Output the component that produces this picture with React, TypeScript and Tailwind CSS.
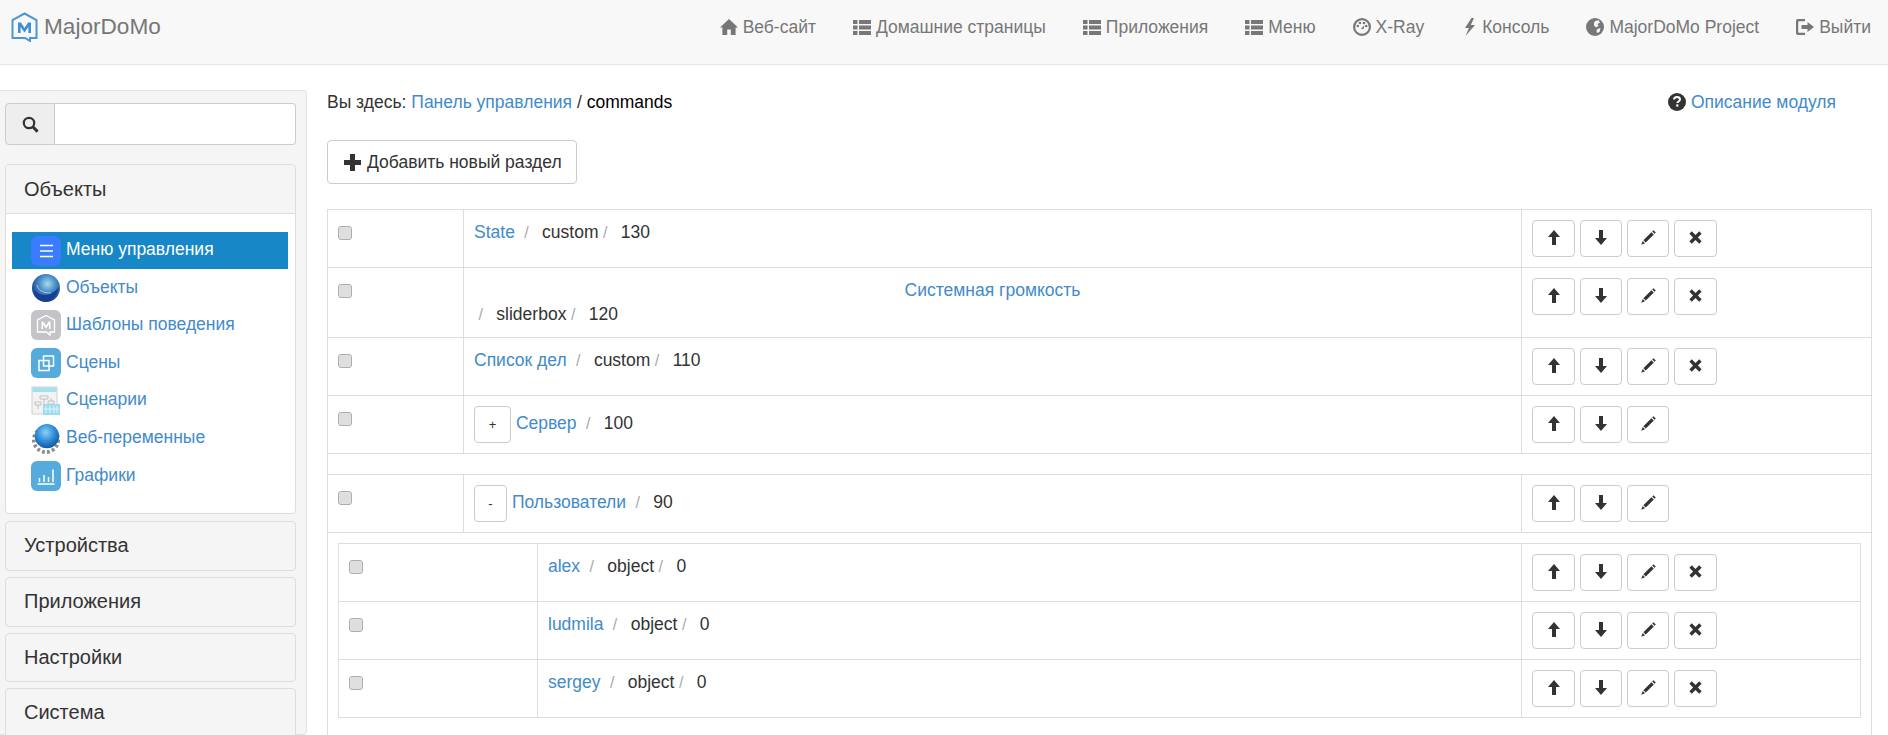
import type { ReactNode } from "react";

const navIconClass = "shrink-0 fill-current";

function IconHome() {
  return (
    <svg width="18" height="16" viewBox="0 0 18 16" className={navIconClass}>
      <path d="M9 0 L18 8.4 L15.6 8.4 L15.6 16 L10.8 16 L10.8 10.6 L7.2 10.6 L7.2 16 L2.4 16 L2.4 8.4 L0 8.4 Z" />
    </svg>
  );
}

function IconList() {
  return (
    <svg width="18" height="15" viewBox="0 0 18 15" className={navIconClass}>
      <path d="M0 0h4.5v4H0zM6 0h12v4H6zM0 5.5h4.5v4H0zM6 5.5h12v4H6zM0 11h4.5v4H0zM6 11h12v4H6z" />
    </svg>
  );
}

function IconDashboard() {
  return (
    <svg width="18" height="18" viewBox="0 0 18 18" className={navIconClass}>
      <path
        fillRule="evenodd"
        d="M9 0a9 9 0 1 1 0 18A9 9 0 0 1 9 0zm0 2.2a6.8 6.8 0 1 0 0 13.6A6.8 6.8 0 0 0 9 2.2z"
      />
      <circle cx="4.8" cy="8" r="1.3" />
      <circle cx="7" cy="5" r="1.3" />
      <circle cx="11" cy="5" r="1.3" />
      <circle cx="13.2" cy="8" r="1.3" />
      <path d="M8 10.6 L11.4 7.2 L10.4 11.6 Z" />
    </svg>
  );
}

function IconFlash() {
  return (
    <svg width="16" height="18" viewBox="0 0 16 18" className={navIconClass}>
      <path d="M10.5 0 L4 10 L8 10 L4.5 18 L14 7 L9.8 7 L13 0 Z" />
    </svg>
  );
}

function IconGlobe() {
  return (
    <svg width="18" height="18" viewBox="0 0 18 18" className={navIconClass}>
      <circle cx="9" cy="9" r="9" />
      <path
        fill="#f8f8f8"
        d="M9 3 L12.5 2.2 L14 4.5 L11.5 6 L12.5 8 L10 9.5 L8 7.5 L8 5 Z M11.5 11 L14.5 10 L13.5 14 L11 15 L10.5 12.5 Z"
      />
    </svg>
  );
}

function IconLogout() {
  return (
    <svg width="18" height="16" viewBox="0 0 18 16" className={navIconClass}>
      <path d="M2 0h7v2.2H3a.8.8 0 0 0-.8.8v10c0 .4.4.8.8.8h6V16H2a2 2 0 0 1-2-2V2a2 2 0 0 1 2-2z" />
      <path d="M11.5 3 L18 8 L11.5 13 L11.5 10 L5.5 10 L5.5 6 L11.5 6 Z" />
    </svg>
  );
}

function IconSearch() {
  return (
    <svg width="17" height="17" viewBox="0 0 17 17" fill="none" stroke="#333" className="shrink-0">
      <circle cx="7" cy="7" r="5.2" strokeWidth="2.2" />
      <path d="M10.8 10.8 L15.6 15.6" strokeWidth="3" />
    </svg>
  );
}

function IconPlus() {
  return (
    <svg width="17" height="17" viewBox="0 0 17 17" fill="#333" className="shrink-0">
      <path d="M6 0h5v6h6v5h-6v6H6v-6H0V6h6z" />
    </svg>
  );
}

function IconHelp() {
  return (
    <svg width="18" height="18" viewBox="0 0 18 18" className="shrink-0">
      <circle cx="9" cy="9" r="9" fill="#333" />
      <path
        d="M6 6.6C6 4.9 7.3 4 9 4s3 .9 3 2.5c0 1.9-2.6 2-2.6 3.4"
        fill="none"
        stroke="#fff"
        strokeWidth="1.9"
      />
      <rect x="8.2" y="11.4" width="2.2" height="2.2" fill="#fff" />
    </svg>
  );
}

function IconUp() {
  return (
    <svg width="12" height="15" viewBox="0 0 12 15" fill="#333" className="-translate-y-[1px]">
      <path d="M6 0 L12 7 L8 7 L8 15 L4 15 L4 7 L0 7 Z" />
    </svg>
  );
}

function IconDown() {
  return (
    <svg width="12" height="15" viewBox="0 0 12 15" fill="#333" className="-translate-y-[1px]">
      <path d="M6 15 L0 8 L4 8 L4 0 L8 0 L8 8 L12 8 Z" />
    </svg>
  );
}

function IconPencil() {
  return (
    <svg width="15" height="15" viewBox="0 0 15 15" fill="#333" className="-translate-y-[1px]">
      <path d="M12.4 0.2 L14.8 2.6 L13.6 3.8 L11.2 1.4 Z M10.4 2.2 L12.8 4.6 L4.8 12.6 L2.4 10.2 Z M1.8 11 L4 13.2 L0.2 14.8 Z" />
    </svg>
  );
}

function IconRemove() {
  return (
    <svg width="13" height="13" viewBox="0 0 14 14" fill="#333" className="-translate-y-[1px]">
      <path d="M3 0.4 L7 4.4 L11 0.4 L13.6 3 L9.6 7 L13.6 11 L11 13.6 L7 9.6 L3 13.6 L0.4 11 L4.4 7 L0.4 3 Z" />
    </svg>
  );
}

function Logo() {
  return (
    <svg width="27" height="30" viewBox="0 0 27 30" fill="none" className="shrink-0">
      <path
        d="M13.5 1.5 L25.5 8 L25.5 26 L19 26 L19 29 L14 26 L1.5 26 L1.5 8 Z"
        stroke="#4a97d6"
        strokeWidth="2"
      />
      <path d="M7 21 L7 10.5 L10 10.5 L13.5 16 L17 10.5 L20 10.5 L20 21 L17.4 21 L17.4 15 L13.5 20.6 L9.6 15 L9.6 21 Z" fill="#3f8fd2" />
    </svg>
  );
}

function SideIconMenu() {
  return (
    <svg width="30" height="30" viewBox="0 0 30 30">
      <rect width="30" height="30" rx="7" fill="#3a7bff" />
      <path d="M9 9.5h13M9 15h13M9 20.5h13" stroke="#fff" strokeWidth="1.6" />
    </svg>
  );
}

function SideIconSphere() {
  return (
    <svg width="30" height="30" viewBox="0 0 30 30">
      <defs>
        <radialGradient id="sphere1" cx="55%" cy="35%" r="65%">
          <stop offset="0%" stopColor="#a6dcef" />
          <stop offset="45%" stopColor="#4a8fc8" />
          <stop offset="100%" stopColor="#123a86" />
        </radialGradient>
      </defs>
      <circle cx="15" cy="15" r="14" fill="url(#sphere1)" />
      <path d="M3 17 C9 24 20 24 28 14 C26 25 18 29 13 28.5 C8 28 4 23 3 17 Z" fill="#173f93" />
      <path d="M6 12 C7 18 13 20 20 20" stroke="#c6e4f2" strokeWidth="1" fill="none" opacity="0.7" />
    </svg>
  );
}

function SideIconTemplate() {
  return (
    <svg width="30" height="30" viewBox="0 0 30 30" fill="none">
      <rect width="30" height="30" rx="6" fill="#c4c4c8" />
      <path d="M15 5.5 L23.5 10 L23.5 22 L19 22 L19 25 L15.5 22 L6.5 22 L6.5 10 Z" stroke="#fff" strokeWidth="1.3" />
      <path d="M10.5 19 L10.5 11.5 L12.3 11.5 L15 15.4 L17.7 11.5 L19.5 11.5 L19.5 19 L18 19 L18 14.4 L15 18.4 L12 14.4 L12 19 Z" fill="#fff" />
    </svg>
  );
}

function SideIconScenes() {
  return (
    <svg width="30" height="30" viewBox="0 0 30 30" fill="none">
      <rect width="30" height="30" rx="6" fill="#55acdc" />
      <rect x="12.5" y="8" width="10" height="10" stroke="#fff" strokeWidth="1.5" />
      <rect x="8" y="12.5" width="10" height="10" stroke="#fff" strokeWidth="1.5" />
    </svg>
  );
}

function SideIconScripts() {
  return (
    <svg width="30" height="30" viewBox="0 0 30 30" fill="none">
      <rect x="1" y="1" width="25" height="27" fill="#f3f3f3" stroke="#d0d0d0" />
      <rect x="1.5" y="1.5" width="24" height="4.5" fill="#a6dfee" />
      <path d="M9 10h8v3H9zM4 16h6v3H4zM17 15h6v3h-6zM13 13v6M7 19v4M20 12v3" stroke="#b5b5b5" strokeWidth="0.8" />
      <rect x="12" y="18" width="17" height="11" fill="#9fdcf0" />
      <path d="M15 20v7M19 20v7M23 20v7M26 20v7M13 23h15" stroke="#dff5fb" strokeWidth="1" />
    </svg>
  );
}

function SideIconWeb() {
  return (
    <svg width="32" height="32" viewBox="0 0 32 32">
      <defs>
        <radialGradient id="sphere2" cx="45%" cy="35%" r="65%">
          <stop offset="0%" stopColor="#8ed0f3" />
          <stop offset="55%" stopColor="#2f8fdb" />
          <stop offset="100%" stopColor="#14569f" />
        </radialGradient>
      </defs>
      <circle cx="16" cy="18" r="13" fill="none" stroke="#8c8c8c" strokeWidth="4" strokeDasharray="3 2.4" />
      <circle cx="17" cy="14" r="13" fill="url(#sphere2)" />
    </svg>
  );
}

function SideIconCharts() {
  return (
    <svg width="30" height="30" viewBox="0 0 30 30" fill="none">
      <rect width="30" height="30" rx="6" fill="#55acdc" />
      <path d="M6.5 23h17M8.5 17v4M13 14v7M17.5 16v5M22 8.5v12.5" stroke="#fff" strokeWidth="1.5" />
    </svg>
  );
}

const navLinks: [ReactNode, string][] = [
  [<IconHome />, "Веб-сайт"],
  [<IconList />, "Домашние страницы"],
  [<IconList />, "Приложения"],
  [<IconList />, "Меню"],
  [<IconDashboard />, "X-Ray"],
  [<IconFlash />, "Консоль"],
  [<IconGlobe />, "MajorDoMo Project"],
  [<IconLogout />, "Выйти"],
];

const sideLinks: [ReactNode, string][] = [
  [<SideIconSphere />, "Объекты"],
  [<SideIconTemplate />, "Шаблоны поведения"],
  [<SideIconScenes />, "Сцены"],
  [<SideIconScripts />, "Сценарии"],
  [<SideIconWeb />, "Веб-переменные"],
  [<SideIconCharts />, "Графики"],
];

function Sep() {
  return <span className="px-[4.5px] text-[16px] text-[#aaa]">/&nbsp;&nbsp;</span>;
}

function Check() {
  return (
    <input
      type="checkbox"
      className="block h-[14px] w-[14px] appearance-none rounded-[3px] border border-[#adadad] bg-[#dedede] shadow-[inset_0_0_1px_#fff]"
    />
  );
}

function IconButton({ children, width }: { children: ReactNode; width: string }) {
  return (
    <button className={`flex h-[37px] items-center justify-center rounded-[4px] border border-[#ccc] bg-white ${width}`}>
      {children}
    </button>
  );
}

function Actions({ remove = true }: { remove?: boolean }) {
  return (
    <div className="flex gap-[5px]">
      <IconButton width="w-[43px]">
        <IconUp />
      </IconButton>
      <IconButton width="w-[42px]">
        <IconDown />
      </IconButton>
      <IconButton width="w-[42px]">
        <IconPencil />
      </IconButton>
      {remove && (
        <IconButton width="w-[43px]">
          <IconRemove />
        </IconButton>
      )}
    </div>
  );
}

function Row({ children, remove, tall }: { children: ReactNode; remove?: boolean; tall?: boolean }) {
  return (
    <tr className={tall ? "h-[70px]" : "h-[58px]"}>
      <td className="border border-[#ddd] py-[10px] pl-[10px] align-top">
        <div className="pt-[6px]">
          <Check />
        </div>
      </td>
      <td className="border border-[#ddd] py-[10px] pl-[10px] pr-[10px] align-top leading-[24px]">{children}</td>
      <td className="border border-[#ddd] py-[10px] pl-[10px] align-top">
        <Actions remove={remove} />
      </td>
    </tr>
  );
}

function Link({ children }: { children: ReactNode }) {
  return <a className="text-[#428bca]">{children}</a>;
}

function ToggleButton({ label, width }: { label: string; width: string }) {
  return (
    <button
      className={`inline-block h-[37px] rounded-[4px] border border-[#ccc] bg-white text-center text-[13px] ${width}`}
    >
      {label}
    </button>
  );
}

function PanelHead({ title, height = "h-[50px]" }: { title: string; height?: string }) {
  return (
    <div
      className={`rounded-[4px] border border-[#ddd] bg-[#f5f5f5] pl-[18px] pt-[10px] text-[20px] leading-[26px] text-[#333] ${height}`}
    >
      {title}
    </div>
  );
}

export default function App() {
  return (
    <div className="flex h-[735px] flex-col overflow-hidden bg-white font-['Liberation_Sans',Arial,sans-serif] text-[17.5px] text-[#333]">
      <nav className="flex h-[65px] shrink-0 border-b border-[#e7e7e7] bg-[#f8f8f8] text-[#777]">
        <div className="flex h-[54px] items-center pl-[11px]">
          <Logo />
          <span className="ml-[6px] text-[22.6px]">MajorDoMo</span>
        </div>
        <div className="ml-auto flex h-[54px] items-center gap-[37px] pr-[17px]">
          {navLinks.map(([icon, label]) => (
            <a key={label} className="flex items-center gap-[5px]">
              {icon}
              <span>{label}</span>
            </a>
          ))}
        </div>
      </nav>

      <div className="flex min-h-0 flex-1">
        <aside className="mt-[25px] w-[307px] shrink-0 rounded-r-[4px] border border-l-0 border-[#e3e3e3] bg-[#f5f5f5] pl-[5px] pr-[10px] pt-[12px]">
          <div className="flex h-[42px]">
            <div className="flex w-[50px] items-center justify-center rounded-l-[4px] border border-[#ccc] bg-[#eee]">
              <IconSearch />
            </div>
            <input className="min-w-0 flex-1 rounded-r-[4px] border border-l-0 border-[#ccc] bg-white" />
          </div>

          <div className="mt-[19px] rounded-[4px] border border-[#ddd] bg-white">
            <div className="flex h-[49px] items-center rounded-t-[4px] border-b border-[#ddd] bg-[#f5f5f5] pl-[18px] text-[20px]">
              Объекты
            </div>
            <div className="pb-[18px] pl-[6px] pr-[7px] pt-[18px]">
              <div className="flex h-[37px] items-center gap-[5px] bg-[#1787c8] pl-[19px] text-white">
                <SideIconMenu />
                <span className="-translate-y-[1px]">Меню управления</span>
              </div>
              {sideLinks.map(([icon, label]) => (
                <div key={label} className="flex h-[37.6px] items-center gap-[5px] pl-[19px] text-[#428bca]">
                  <div className="flex w-[30px] justify-center">{icon}</div>
                  <span className="-translate-y-[1px]">{label}</span>
                </div>
              ))}
            </div>
          </div>

          <div className="mt-[7px] flex flex-col gap-[6px]">
            <PanelHead title="Устройства" />
            <PanelHead title="Приложения" />
            <PanelHead title="Настройки" height="h-[49px]" />
            <PanelHead title="Система" height="h-[60px]" />
          </div>
        </aside>

        <main className="ml-[20px] mr-[16px] min-w-0 flex-1 pt-[25px]">
          <div className="flex h-[24px] items-center justify-between">
            <div>
              Вы здесь: <Link>Панель управления</Link> / <span className="text-black">commands</span>
            </div>
            <div className="mr-[36px] flex items-center gap-[5px]">
              <IconHelp />
              <Link>Описание модуля</Link>
            </div>
          </div>

          <button className="mt-[26px] flex h-[44px] w-[250px] items-center gap-[6px] rounded-[4px] border border-[#ccc] bg-white pl-[16px]">
            <IconPlus />
            <span>Добавить новый раздел</span>
          </button>

          <table className="mt-[25px] w-full table-fixed border-collapse">
            <colgroup>
              <col className="w-[136px]" />
              <col />
              <col className="w-[350px]" />
            </colgroup>
            <tbody>
              <Row>
                <Link>State</Link> <Sep />
                custom
                <Sep />
                130
              </Row>
              <Row tall>
                <div className="text-center">
                  <Link>Системная громкость</Link>
                </div>
                <Sep />
                sliderbox
                <Sep />
                120
              </Row>
              <Row>
                <Link>Список дел</Link> <Sep />
                custom
                <Sep />
                110
              </Row>
              <Row remove={false}>
                <ToggleButton label="+" width="w-[37px]" /> <Link>Сервер</Link> <Sep />
                100
              </Row>
              <tr className="h-[21px]">
                <td colSpan={3} className="border border-[#ddd]"></td>
              </tr>
              <Row remove={false}>
                <ToggleButton label="-" width="w-[33px]" /> <Link>Пользователи</Link> <Sep />
                90
              </Row>
              <tr>
                <td colSpan={3} className="border-x border-[#ddd] px-[10px] pb-[30px] pt-[10px] align-top">
                  <table className="w-full table-fixed border-collapse">
                    <colgroup>
                      <col className="w-[199px]" />
                      <col />
                      <col className="w-[339px]" />
                    </colgroup>
                    <tbody>
                      {["alex", "ludmila", "sergey"].map((name) => (
                        <Row key={name}>
                          <Link>{name}</Link> <Sep />
                          object
                          <Sep />0
                        </Row>
                      ))}
                    </tbody>
                  </table>
                </td>
              </tr>
            </tbody>
          </table>
        </main>
      </div>
    </div>
  );
}
